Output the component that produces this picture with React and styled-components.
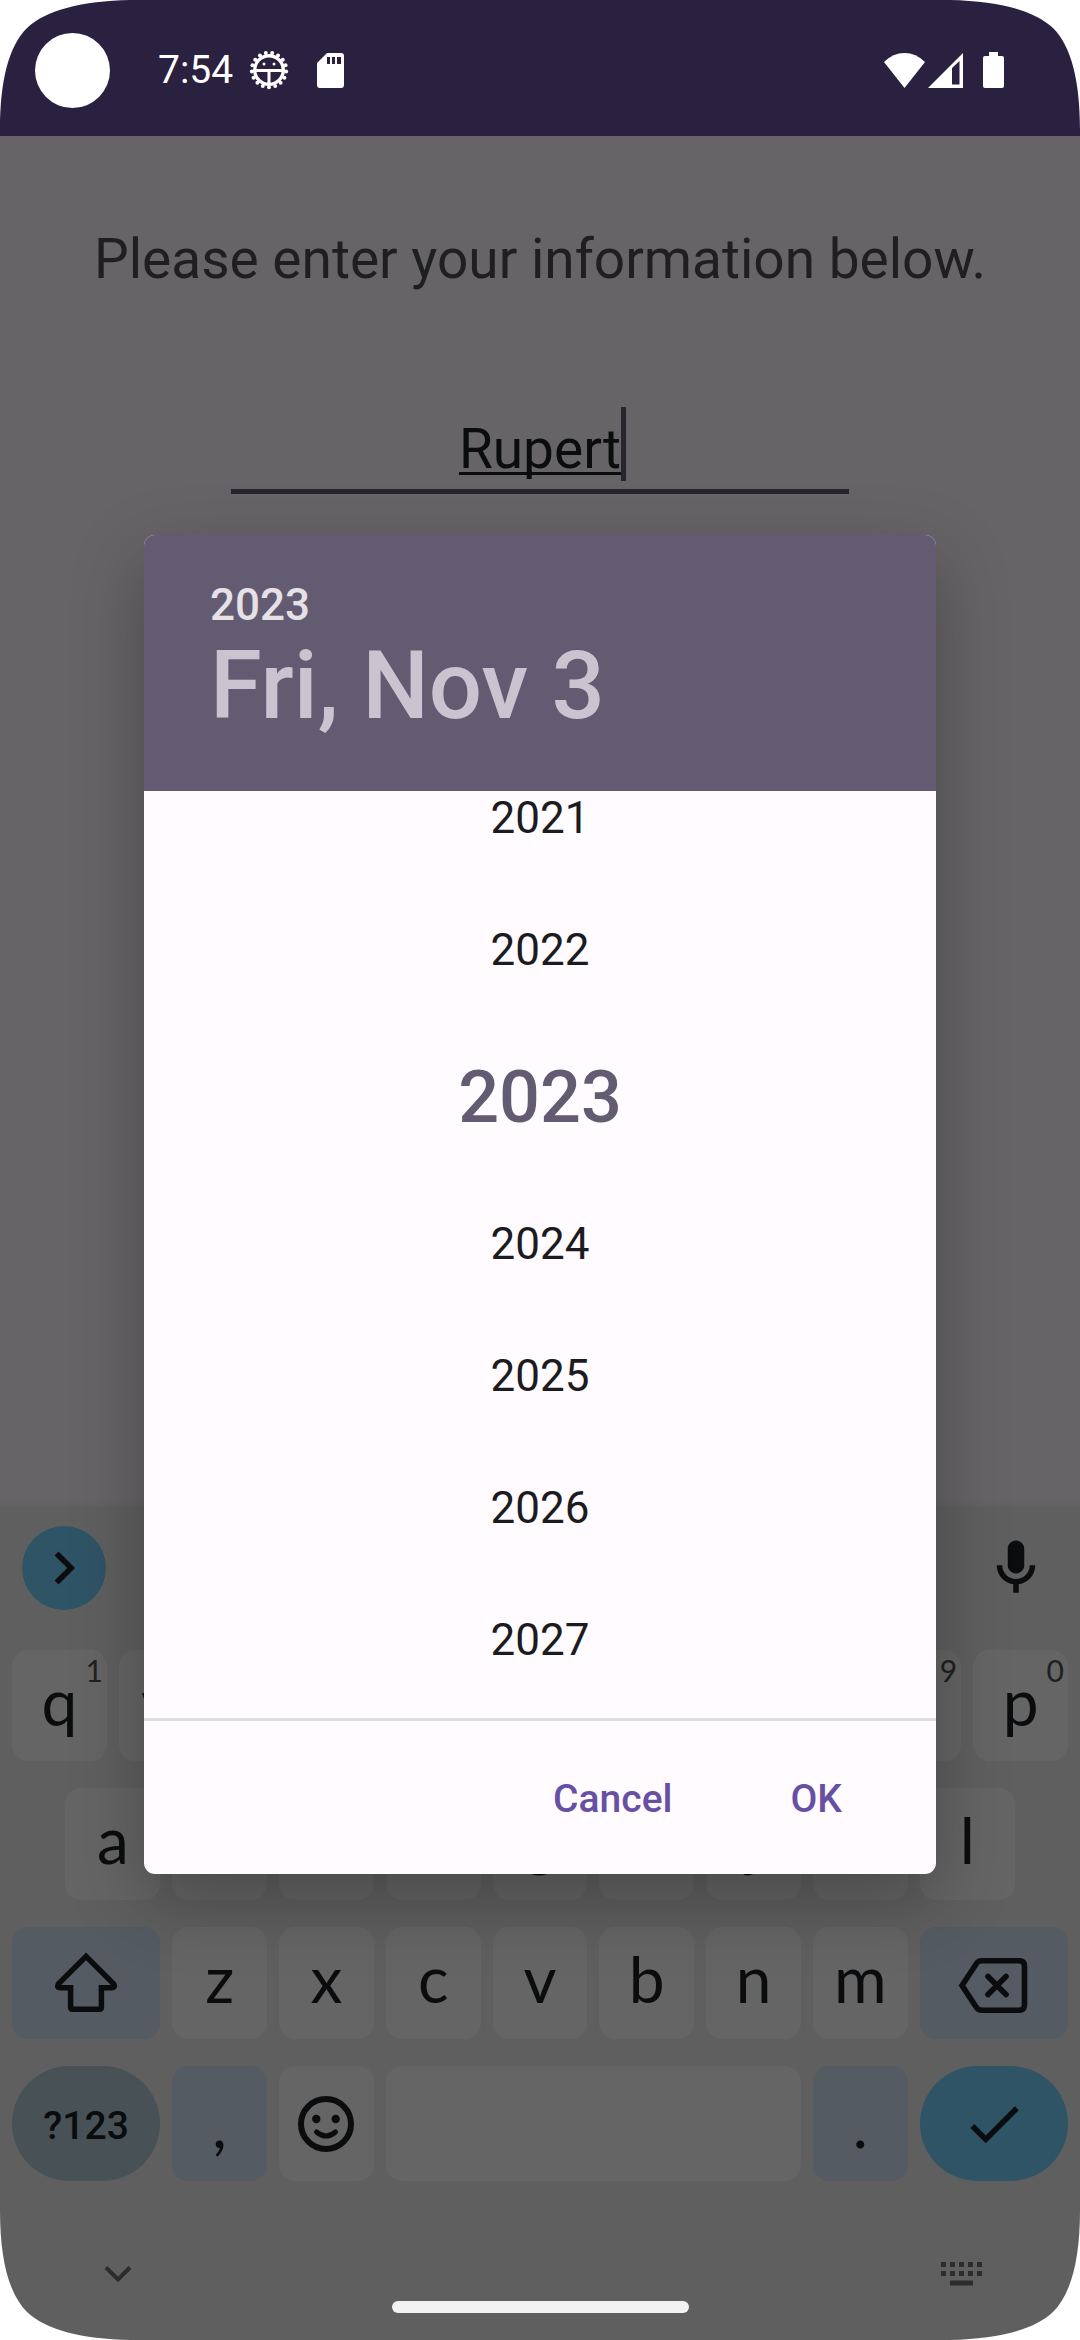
import React, { useState } from "react";
import styled, { createGlobalStyle, css } from "styled-components";

const color = {
  status: "#2a2040",
  page: "#666466",
  keyboard: "#5f5f5f",
  key: "#656565",
  softKey: "#545b62",
  modeKey: "#485156",
  accentKey: "#2f5466",
  ink: "#0b0c0d",
  surface: "#fffbfe",
  header: "#635b71",
  primary: "#6750a4",
};

const GlobalStyle = createGlobalStyle`
  *, *::before, *::after { box-sizing: border-box; }
  body {
    margin: 0;
    background: #fff;
    font-family: Roboto, "Liberation Sans", sans-serif;
  }
  button {
    margin: 0;
    padding: 0;
    border: 0;
    background: none;
    color: inherit;
    font: inherit;
    cursor: pointer;
  }
`;

const Screen = styled.div`
  position: relative;
  display: flex;
  flex-direction: column;
  min-height: 100vh;
  overflow: hidden;
  background: ${color.page};
`;

const Corner = styled.svg`
  position: absolute;
  z-index: 3;
  width: 130px;
  height: 130px;
  ${(p) => (p.$bottom ? "bottom: 0;" : "top: 0;")}
  ${(p) => (p.$right ? "right: 0;" : "left: 0;")}
  transform: scale(${(p) => (p.$right ? -1 : 1)}, ${(p) => (p.$bottom ? -1 : 1)});
`;

/* ---------- status bar ---------- */

const StatusBar = styled.header`
  display: flex;
  align-items: center;
  justify-content: space-between;
  height: 136px;
  padding: 4px 76px 0 35px;
  background: ${color.status};
  color: #fff;
`;

const StatusGroup = styled.div`
  display: flex;
  align-items: center;
`;

const Camera = styled.span`
  width: 75px;
  height: 75px;
  margin-right: 48px;
  border-radius: 50%;
  background: #fff;
`;

const Clock = styled.time`
  margin-right: 16px;
  font-size: 39px;
  line-height: 48px;
`;

const Glyph = styled.svg`
  display: block;
  flex: none;
  width: ${(p) => p.$w}px;
  height: ${(p) => p.$h}px;
  margin-left: ${(p) => p.$gap || 0}px;
`;

/* ---------- form ---------- */

const Form = styled.main`
  display: flex;
  flex: 1;
  flex-direction: column;
  align-items: center;
  padding-top: 90px;
`;

const Prompt = styled.label`
  color: #1f1e21;
  font-size: 55px;
  line-height: 66px;
`;

const NameField = styled.div`
  display: flex;
  align-items: center;
  justify-content: center;
  width: min(618px, 80%);
  height: 90px;
  margin-top: 112px;
  padding-bottom: 6px;
  border-bottom: 5px solid #28252e;
`;

const NameInput = styled.input`
  field-sizing: content;
  height: 74px;
  padding: 10px 0 0;
  border: 0;
  outline: 0;
  background: none;
  color: ${color.ink};
  caret-color: transparent;
  font-family: inherit;
  font-size: 55px;
  line-height: 64px;
  text-decoration: underline;
  text-decoration-thickness: 3px;
  text-decoration-skip-ink: none;
  text-underline-offset: 4px;
`;

const Caret = styled.span`
  width: 5px;
  height: 74px;
  margin-right: -5px;
  background: #28252e;
`;

/* ---------- keyboard ---------- */

const Keyboard = styled.section`
  background: ${color.keyboard};
  box-shadow: 0 0 6px ${color.keyboard};
  color: ${color.ink};
`;

const Toolbar = styled.div`
  display: flex;
  align-items: center;
  justify-content: space-between;
  height: 143px;
  padding: 0 31px 22px 22px;
`;

const ExpandButton = styled.button`
  display: grid;
  place-items: center;
  width: 84px;
  height: 84px;
  border-radius: 50%;
  background: ${color.accentKey};
`;

const Keys = styled.div`
  display: grid;
  grid-template-columns: repeat(20, minmax(0, 1fr));
  grid-template-rows: 111px 112px 112px 115px;
  gap: 27px 12px;
  padding: 0 12px;
`;

const tones = {
  plain: color.key,
  soft: color.softKey,
  mode: color.modeKey,
  accent: color.accentKey,
};

const Key = styled.button`
  position: relative;
  display: flex;
  align-items: center;
  justify-content: center;
  grid-column: ${(p) => (p.$start ? `${p.$start} / ` : "")} span ${(p) => p.$span || 2};
  border-radius: ${(p) => (p.$round ? 58 : 16)}px;
  background: ${(p) => tones[p.$tone || "plain"]};
  font-family: Lato, Roboto, sans-serif;
  font-size: 64px;
  line-height: 76px;
  ${(p) => p.$letter && css`padding-bottom: 8px;`}
  ${(p) =>
    p.$mode &&
    css`
      padding-top: 4px;
      font-family: Roboto, sans-serif;
      font-size: 39px;
      font-weight: 500;
      line-height: 48px;
    `}
`;

const Hint = styled.span`
  position: absolute;
  top: 2px;
  right: 4px;
  color: #1f2020;
  font-size: 30px;
  line-height: 36px;
`;

const NavBar = styled.nav`
  display: flex;
  flex-direction: column;
  align-items: center;
  padding: 66px 90px 27px;
  color: #2c2c2c;
`;

const NavRow = styled.div`
  display: flex;
  justify-content: space-between;
  width: 100%;
`;

const NavButton = styled.button`
  display: grid;
  place-items: center;
  width: 56px;
  height: 54px;
`;

const HomePill = styled.span`
  width: 297px;
  height: 12px;
  border-radius: 6px;
  background: #f2f2f2;
`;

/* ---------- date dialog ---------- */

const Overlay = styled.div`
  position: absolute;
  inset: 0;
  z-index: 2;
  display: flex;
  align-items: center;
  justify-content: center;
  padding: 69px 144px 0;
`;

const Dialog = styled.section`
  width: 100%;
  overflow: hidden;
  border-radius: 11px;
  background: ${color.surface};
  box-shadow: 0 26px 72px rgba(0, 0, 0, 0.28);
`;

const DialogHeader = styled.header`
  display: flex;
  flex-direction: column;
  align-items: flex-start;
  padding: 44px 66px 50px;
  background: ${color.header};
  font-weight: 500;
`;

const HeaderYear = styled.button`
  color: #e6e1e6;
  font-size: 44px;
  line-height: 52px;
`;

const HeaderDate = styled.button`
  color: #cac4d0;
  font-size: 94px;
  line-height: 110px;
`;

const YearList = styled.ul`
  display: flex;
  flex-direction: column;
  justify-content: flex-end;
  height: 927px;
  margin: 0;
  padding: 0 0 12px;
  overflow: hidden;
  list-style: none;
`;

const YearButton = styled.button`
  display: block;
  width: 100%;
  color: ${(p) => (p.$selected ? color.header : "#1c1b1f")};
  font-size: ${(p) => (p.$selected ? 72 : 44)}px;
  font-weight: ${(p) => (p.$selected ? 500 : 400)};
  line-height: ${(p) => (p.$selected ? 160 : 132)}px;
  padding-top: ${(p) => (p.$selected ? 2 : 0)}px;
`;

const Actions = styled.footer`
  display: flex;
  justify-content: flex-end;
  gap: 54px;
  padding: 30px 62px 27px;
  border-top: 3px solid #e0dde0;
`;

const TextButton = styled.button`
  padding: 0 32px;
  color: ${color.primary};
  font-size: 39px;
  font-weight: 500;
  line-height: 96px;
`;

/* ---------- icons ---------- */

const MaterialIcon = ({ d }) => (
  <Glyph $w={66} $h={66} viewBox="0 0 24 24" fill="currentColor" aria-hidden="true">
    <path d={d} />
  </Glyph>
);

const BugIcon = () => {
  const teeth = Array.from({ length: 17 }, (_, i) => {
    const a = Math.PI / 2 + (i * 2 * Math.PI) / 17;
    return { x: 20 + 17.2 * Math.cos(a), y: 20 + 17.2 * Math.sin(a) };
  });
  return (
    <Glyph $w={40} $h={40} viewBox="0 0 40 40" aria-hidden="true">
      {teeth.map((t) => (
        <circle key={`${t.x}-${t.y}`} cx={t.x} cy={t.y} r="2" fill="#fff" />
      ))}
      <circle cx="20" cy="20" r="14.300" fill="none" stroke="#fff" strokeWidth="3.400" />
      <path d="M7 20.500H33M20 20.500V34" fill="none" stroke="#fff" strokeWidth="3" />
      <circle cx="15" cy="14" r="1.500" fill="#fff" />
      <circle cx="25" cy="14" r="1.500" fill="#fff" />
    </Glyph>
  );
};

const SdCardIcon = () => (
  <Glyph $w={27} $h={35} $gap={28} viewBox="0 0 27 35" aria-hidden="true">
    <path
      fill="#fff"
      fillRule="evenodd"
      d="M10 0H24Q27 0 27 3V32Q27 35 24 35H3Q0 35 0 32V10ZM10 4V11H13V4ZM15 4V11H18V4ZM20 4V11H24V4Z"
    />
  </Glyph>
);

const WifiIcon = () => (
  <Glyph $w={41} $h={35} viewBox="0 0 41 35" fill="#fff" aria-hidden="true">
    <path d="M20.500 35L0 9Q9 0 20.500 0T41 9Z" />
  </Glyph>
);

const SignalIcon = () => (
  <Glyph $w={35} $h={35} $gap={3} viewBox="0 0 35 35" aria-hidden="true">
    <path fill="#fff" fillRule="evenodd" d="M35 0V35H0ZM24 15V31.500H31.500V8Z" />
  </Glyph>
);

const BatteryIcon = () => (
  <Glyph $w={21} $h={36} $gap={20} viewBox="0 0 21 36" fill="#fff" aria-hidden="true">
    <path d="M6 0H15V4H19Q21 4 21 6V34Q21 36 19 36H2Q0 36 0 34V6Q0 4 2 4H6Z" />
  </Glyph>
);

const ShiftIcon = () => (
  <Glyph $w={66} $h={66} viewBox="0 0 24 24" fill="none" stroke="currentColor" strokeWidth="2" aria-hidden="true">
    <path d="M12 2.300L1.900 12.400Q1.300 13.700 2.500 13.700H6.400V20.800Q6.400 21.500 7.100 21.500H16.900Q17.600 21.500 17.600 20.800V13.700H21.500Q22.700 13.700 22.100 12.400Z" />
  </Glyph>
);

const BackspaceIcon = () => (
  <Glyph $w={72} $h={66} viewBox="0 0 72 66" fill="none" stroke="currentColor" strokeWidth="5.600" aria-hidden="true">
    <path d="M4 35.500L18.500 13.500Q20.300 10.800 23.500 10.800H61Q66.500 10.800 66.500 16.300V54.700Q66.500 60.200 61 60.200H23.500Q20.300 60.200 18.500 57.500Z" />
    <path strokeLinecap="round" d="M30 26.500L48 44.500M48 26.500L30 44.500" />
  </Glyph>
);

const SmileIcon = () => (
  <Glyph $w={66} $h={66} viewBox="0 0 66 66" fill="none" stroke="currentColor" aria-hidden="true">
    <circle cx="33" cy="33" r="25" strokeWidth="6" />
    <circle cx="23.300" cy="28" r="4.200" fill="currentColor" stroke="none" />
    <circle cx="42.700" cy="28" r="4.200" fill="currentColor" stroke="none" />
    <path d="M23.500 41Q33 49 42.500 41" strokeWidth="5" strokeLinecap="round" />
  </Glyph>
);

const HideIcon = () => (
  <Glyph $w={28} $h={18} viewBox="0 0 28 18" fill="none" stroke="currentColor" strokeWidth="4" aria-hidden="true">
    <path d="M2 2.500L14 14.500L26 2.500" />
  </Glyph>
);

const LayoutIcon = () => (
  <Glyph $w={42} $h={24} viewBox="0 0 42 24" fill="currentColor" aria-hidden="true">
    {[0, 9, 18, 27, 36].map((x) => (
      <path key={x} d={`M${x} 0h5v5h-5zM${x} 9h5v5h-5z`} />
    ))}
    <path d="M9 18.500H32V23.500H9Z" />
  </Glyph>
);

/* ---------- data ---------- */

const topRow = [..."qwertyuiop"];
const homeRow = [..."asdfghjkl"];
const bottomRow = [..."zxcvbnm"];
const years = [2021, 2022, 2023, 2024, 2025, 2026, 2027];
const cornerPath = "M0 0H130C82 1 46 10 27 28C9 46 0 80 0 130Z";

export default function App() {
  const [name, setName] = useState("Rupert");
  const [year, setYear] = useState(2023);

  return (
    <>
      <GlobalStyle />
      <Screen>
        <StatusBar>
          <StatusGroup>
            <Camera />
            <Clock>7:54</Clock>
            <BugIcon />
            <SdCardIcon />
          </StatusGroup>
          <StatusGroup>
            <WifiIcon />
            <SignalIcon />
            <BatteryIcon />
          </StatusGroup>
        </StatusBar>

        <Form>
          <Prompt htmlFor="name">Please enter your information below.</Prompt>
          <NameField>
            <NameInput id="name" type="text" value={name} onChange={(e) => setName(e.target.value)} />
            <Caret />
          </NameField>
        </Form>

        <Keyboard aria-label="Keyboard">
          <Toolbar>
            <ExpandButton type="button" aria-label="Expand toolbar">
              <MaterialIcon d="M8.590 16.590L13.170 12L8.590 7.410L10 6l6 6l-6 6z" />
            </ExpandButton>
            <button type="button" aria-label="Voice input">
              <MaterialIcon d="M12 14c1.660 0 3-1.340 3-3V5c0-1.660-1.340-3-3-3S9 3.340 9 5v6c0 1.660 1.340 3 3 3zM17 11c0 2.760-2.240 5-5 5s-5-2.240-5-5H5c0 3.530 2.610 6.430 6 6.920V21h2v-3.080c3.390-.490 6-3.390 6-6.920h-2z" />
            </button>
          </Toolbar>

          <Keys>
            {topRow.map((k, i) => (
              <Key key={k} type="button" $letter>
                {k}
                <Hint>{(i + 1) % 10}</Hint>
              </Key>
            ))}
            {homeRow.map((k, i) => (
              <Key key={k} type="button" $letter $start={i === 0 ? 2 : undefined}>
                {k}
              </Key>
            ))}
            <Key type="button" $start={1} $span={3} $tone="soft" aria-label="Shift">
              <ShiftIcon />
            </Key>
            {bottomRow.map((k) => (
              <Key key={k} type="button" $letter>
                {k}
              </Key>
            ))}
            <Key type="button" $span={3} $tone="soft" aria-label="Backspace">
              <BackspaceIcon />
            </Key>
            <Key type="button" $span={3} $tone="mode" $round $mode>
              ?123
            </Key>
            <Key type="button" $tone="soft">
              ,
            </Key>
            <Key type="button" aria-label="Emoji">
              <SmileIcon />
            </Key>
            <Key type="button" $span={8} aria-label="Space" />
            <Key type="button" $tone="soft">
              .
            </Key>
            <Key type="button" $span={3} $tone="accent" $round aria-label="Done">
              <MaterialIcon d="M9 16.170L4.830 12l-1.420 1.410L9 19L21 7l-1.410-1.410z" />
            </Key>
          </Keys>

          <NavBar>
            <NavRow>
              <NavButton type="button" aria-label="Hide keyboard">
                <HideIcon />
              </NavButton>
              <NavButton type="button" aria-label="Switch keyboard">
                <LayoutIcon />
              </NavButton>
            </NavRow>
            <HomePill />
          </NavBar>
        </Keyboard>

        <Overlay>
          <Dialog role="dialog" aria-label="Choose a date">
            <DialogHeader>
              <HeaderYear type="button">{year}</HeaderYear>
              <HeaderDate type="button">Fri, Nov 3</HeaderDate>
            </DialogHeader>
            <YearList>
              {years.map((y) => (
                <li key={y}>
                  <YearButton type="button" $selected={y === year} onClick={() => setYear(y)}>
                    {y}
                  </YearButton>
                </li>
              ))}
            </YearList>
            <Actions>
              <TextButton type="button">Cancel</TextButton>
              <TextButton type="button">OK</TextButton>
            </Actions>
          </Dialog>
        </Overlay>

        {[
          [false, false],
          [true, false],
          [false, true],
          [true, true],
        ].map(([right, bottom]) => (
          <Corner key={`${right}-${bottom}`} $right={right} $bottom={bottom} viewBox="0 0 130 130" aria-hidden="true">
            <path d={cornerPath} fill="#fff" />
          </Corner>
        ))}
      </Screen>
    </>
  );
}
